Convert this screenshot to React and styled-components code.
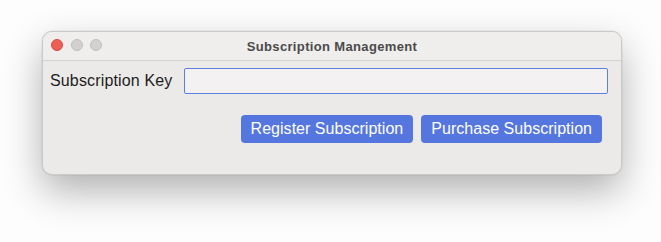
import React from "react";
import styled, { createGlobalStyle } from "styled-components";

const Global = createGlobalStyle`
  html, body { margin: 0; padding: 0; background: #fdfdfd; }
  body { font-family: "Liberation Sans", Arial, sans-serif; }
`;

const Page = styled.div`
  width: 661px;
  height: 242px;
  padding: 31px 0 0 42px;
  box-sizing: border-box;
`;

const Window = styled.div`
  width: 580px;
  height: 144px;
  box-sizing: border-box;
  border-radius: 10px;
  background: #ebeae8;
  border: 1px solid #cbcac8;
  box-shadow: 0 16px 38px rgba(0, 0, 0, 0.3), 0 0 0 0.5px rgba(0, 0, 0, 0.08);
  overflow: hidden;
  display: flex;
  flex-direction: column;
`;

const TitleBar = styled.div`
  position: relative;
  height: 28px;
  flex: none;
  background: #efeeed;
  border-bottom: 1px solid #d3d2d0;
  display: flex;
  align-items: center;
  justify-content: center;
`;

const Lights = styled.div`
  position: absolute;
  left: 8px;
  top: 7px;
  display: flex;
  gap: 7.5px;
`;

const Light = styled.span`
  width: 12px;
  height: 12px;
  border-radius: 50%;
  box-sizing: border-box;
  background: ${(p) => p.$c};
  border: 0.5px solid ${(p) => p.$b};
`;

const Title = styled.div`
  font-size: 13px;
  font-weight: 700;
  letter-spacing: 0.35px;
  color: #4b4a49;
  margin-top: 1px;
`;

const Body = styled.div`
  padding: 7px 13px 0 7px;
  display: flex;
  flex-direction: column;
`;

const Row = styled.div`
  display: flex;
  align-items: center;
  gap: 12px;
`;

const Label = styled.label`
  font-size: 16px;
  letter-spacing: 0.15px;
  color: #1d1d1d;
`;

const Input = styled.input`
  flex: 1;
  height: 26px;
  box-sizing: border-box;
  border: 1px solid #5d80e0;
  border-radius: 2px;
  background: #f3f1f1;
  outline: none;
  font-family: inherit;
  font-size: 14px;
`;

const Buttons = styled.div`
  display: flex;
  justify-content: flex-end;
  gap: 8px;
  margin-top: 21px;
  padding-right: 6px;
`;

const Button = styled.button`
  height: 28px;
  padding: 0 10px;
  border: none;
  border-radius: 4px;
  background: #5576de;
  color: #fff;
  font-family: inherit;
  font-size: 16px;
  letter-spacing: 0.03px;
  cursor: pointer;
`;

export default function App() {
  return (
    <>
      <Global />
      <Page>
        <Window>
          <TitleBar>
            <Lights>
              <Light $c="#ec5f57" $b="#d9493f" />
              <Light $c="#d2d1d0" $b="#bfbebd" />
              <Light $c="#d2d1d0" $b="#bfbebd" />
            </Lights>
            <Title>Subscription Management</Title>
          </TitleBar>
          <Body>
            <Row>
              <Label>Subscription Key</Label>
              <Input />
            </Row>
            <Buttons>
              <Button>Register Subscription</Button>
              <Button>Purchase Subscription</Button>
            </Buttons>
          </Body>
        </Window>
      </Page>
    </>
  );
}
